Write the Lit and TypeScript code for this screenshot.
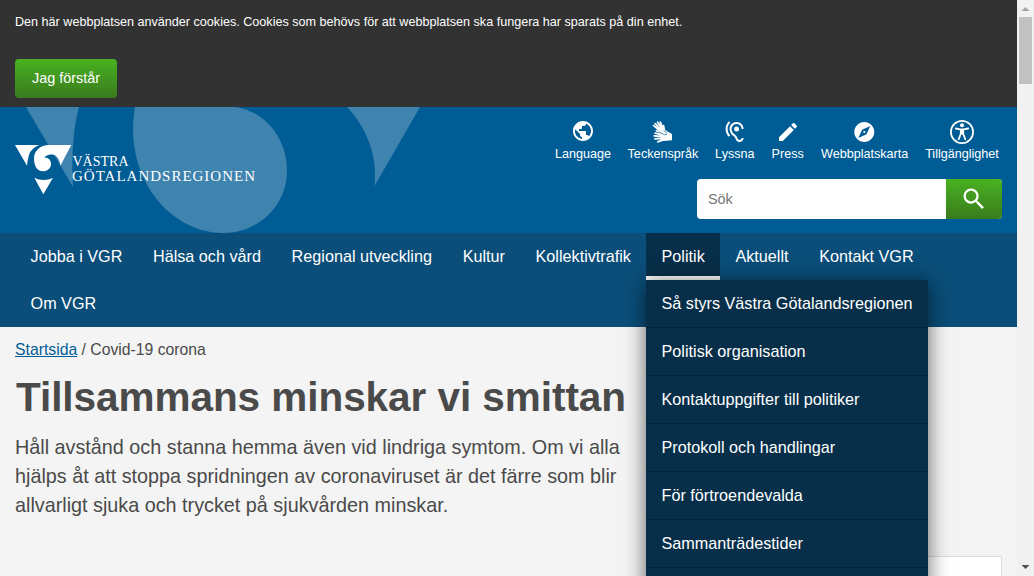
import { LitElement, html, svg, css } from "lit";
import { customElement } from "lit/decorators.js";

const tools = [
  { label: "Language", width: 56, icon: svg`<path fill="#fff" d="M12 2C6.480 2 2 6.480 2 12s4.480 10 10 10 10-4.480 10-10S17.520 2 12 2zm-1 17.930c-3.950-.49-7-3.850-7-7.930 0-.62.08-1.210.21-1.790L9 15v1c0 1.100.9 2 2 2v1.930zm6.900-2.540c-.26-.81-1-1.390-1.900-1.390h-1v-3c0-.55-.45-1-1-1H8v-2h2c.55 0 1-.45 1-1V7h2c1.100 0 2-.9 2-2v-.41c2.930 1.190 5 4.060 5 7.410 0 2.080-.8 3.970-2.100 5.390z"/>` },
  { label: "Teckenspråk", width: 71, icon: svg`<g fill="none" stroke="#fff" stroke-linecap="round"><path stroke-width="1.800" d="M7.500 10.500 2.700 6.600M8.600 9.500 4.200 4.600M10 8.500 6.600 3.300M11.500 8.500 9.300 3.200"/><path stroke-width="1.900" d="M13.200 11l-.7-4.200"/><path stroke-width="1.800" d="M11 15.800 4.200 14.200M11 17.500l-7.800-.6M11 19.300l-7 .6M12 20.900l-5.200 1.900M13.500 15.500 5.500 11.700"/><path fill="#fff" stroke="none" d="M6.800 10.500 10.800 7.600l2.600 2.600 1.800 1.600L21 15v6.200l-5.300.6-5.200.2-.6-5.500 2-1.200-4.400-2.600z"/><path stroke="#005c95" stroke-width=".7" stroke-linecap="butt" d="m7.500 12.800 6 3 2.500-.5M12.500 11.200l3.800 3.400"/></g>` },
  { label: "Lyssna", width: 40, icon: svg`<path fill="#fff" transform="translate(-.4 1)" d="M17 20c-.29 0-.56-.06-.76-.15-.71-.37-1.210-.88-1.710-2.380-.51-1.560-1.470-2.290-2.390-3-.79-.61-1.610-1.240-2.320-2.530C9.290 10.980 9 9.930 9 9c0-2.800 2.200-5 5-5s5 2.200 5 5h2c0-3.930-3.070-7-7-7S7 5.070 7 9c0 1.260.38 2.650 1.070 3.900.91 1.650 1.980 2.480 2.850 3.150.81.620 1.390 1.070 1.710 2.050.6 1.820 1.370 2.840 2.730 3.550.51.230 1.070.35 1.640.35 2.210 0 4-1.790 4-4h-2c0 1.100-.9 2-2 2zM7.640 2.640 6.220 1.220C4.230 3.210 3 5.960 3 9s1.230 5.790 3.220 7.780l1.410-1.410C6.010 13.740 5 11.490 5 9s1.010-4.740 2.640-6.360zM11.500 9a2.500 2.500 0 0 0 5 0 2.500 2.500 0 0 0-5 0z"/>` },
  { label: "Press", width: 33, icon: svg`<path fill="#fff" d="M3 17.250V21h3.750L17.810 9.940l-3.750-3.750L3 17.250zM20.710 7.040a1 1 0 0 0 0-1.410l-2.340-2.340a1 1 0 0 0-1.410 0l-1.830 1.830 3.750 3.750 1.830-1.830z" transform="translate(0 1)"/>` },
  { label: "Webbplatskarta", width: 88, icon: svg`<path fill="#fff" transform="translate(-.7 1)" d="M12 10.900a1.100 1.100 0 1 0 0 2.200 1.100 1.100 0 0 0 0-2.200zM12 2C6.480 2 2 6.480 2 12s4.480 10 10 10 10-4.480 10-10S17.520 2 12 2zm2.190 12.190L6 18l3.810-8.190L18 6l-3.810 8.190z"/>` },
  { label: "Tillgänglighet", width: 74, icon: svg`<g transform="translate(0 1)"><circle cx="12" cy="12" r="11.100" fill="none" stroke="#fff" stroke-width="1.700"/><circle cx="12" cy="5.300" r="2" fill="#fff"/><path fill="none" stroke="#fff" stroke-width="1.800" stroke-linecap="round" stroke-linejoin="round" d="M5.800 8.500 10.300 9.300h3.400l4.500-.8M10.800 9.500v4.200L8.700 19.200M13.200 9.500v4.200l2.100 5.500"/><path fill="#fff" d="M10 9h4v5.500h-4z"/></g>` },
];

const nav = ["Jobba i VGR", "Hälsa och vård", "Regional utveckling", "Kultur", "Kollektivtrafik", "Politik", "Aktuellt", "Kontakt VGR", "Om VGR"];
const submenu = ["Så styrs Västra Götalandsregionen", "Politisk organisation", "Kontaktuppgifter till politiker", "Protokoll och handlingar", "För förtroendevalda", "Sammanträdestider", ""];

@customElement("app-root")
class AppRoot extends LitElement {
  static styles = css`
    :host { display: block; height: 576px; overflow: hidden; font-family: "Liberation Sans", Arial, sans-serif; color: #4a4a4a; }
    * { box-sizing: border-box; }
    .frame { display: grid; grid-template-columns: 1017px 17px; height: 576px; }
    .page { height: 576px; overflow: hidden; background: #f4f4f4; }
    .cookie { height: 107px; background: #323232; padding: 14px 15px 0; color: #fff; font-size: 12.600px; line-height: 17px; }
    .cookie p { margin: 0 0 28px; white-space: nowrap; }
    .ok { display: block; width: 102px; height: 39px; padding: 0 0 1px; border: 0; border-radius: 4px; color: #fff; background: linear-gradient(#49b220, #3a7b1e); font: 14.400px "Liberation Sans", sans-serif; }
    .top { position: relative; height: 126px; background: #005c95; overflow: hidden; }
    .swirl { position: absolute; left: 0; top: 0; }
    .bar { position: relative; display: flex; justify-content: space-between; padding: 12px 15px 0; }
    .logo { margin-top: 24px; display: block; overflow: visible; }
    .right { display: flex; flex-direction: column; align-items: flex-end; }
    .tools { display: flex; gap: 16.400px; padding-right: 3px; }
    .tool { display: flex; flex-direction: column; align-items: center; font-size: 12.600px; line-height: 16px; color: #fff; white-space: nowrap; }
    .tool svg { display: block; margin-bottom: 3px; overflow: visible; }
    .search { display: flex; width: 305px; height: 40px; margin-top: 17px; border-radius: 4px; overflow: hidden; background: #fff; }
    .field { flex: 1; padding: 0 11px; font-size: 14.400px; line-height: 40px; color: #757575; }
    .go { width: 56px; display: grid; place-items: center; background: linear-gradient(#49b220, #3a7b1e); }
    .nav { position: relative; display: flex; flex-wrap: wrap; height: 94px; padding: 0 15px; background: #0a4e79; }
    .item { position: relative; height: 47px; padding: 0 15.100px 0 15.550px; line-height: 47px; font-size: 16.200px; color: #fff; white-space: nowrap; }
    .open { background: #082f49; border-bottom: 4px solid #fff; }
    .menu { position: absolute; z-index: 2; top: 47px; left: 0; width: 282px; background: #082f49; box-shadow: 0 3px 20px rgba(0, 0, 0, .6); }
    .row { height: 48px; padding: 0 15.550px; line-height: 47px; border-bottom: 1px solid #042236; }
    .main { padding: 13px 15px 0; }
    .crumbs { font-size: 15.750px; line-height: 20px; white-space: nowrap; }
    .crumbs a { color: #005c95; text-decoration: underline; }
    h1 { margin: 12px 0 0; padding-left: 1px; font-size: 40.500px; letter-spacing: -.05px; line-height: 50px; white-space: nowrap; }
    .lead { margin: 11px 0 0; width: 620px; font-size: 19.800px; line-height: 29px; }
    .card { margin: 36px 0 0 auto; width: 300px; height: 60px; background: #fff; border: 1px solid #dcdcdc; }
    .scroll { display: flex; flex-direction: column; align-items: center; justify-content: space-between; background: #f1f1f1; }
    .grip { width: 13px; height: 67px; background: #c1c1c1; margin-bottom: auto; }
    .arrow { display: block; }
  `;

  logo() {
    return svg`<svg class="logo" width="242" height="52" viewBox="0 0 242 52" fill="#fff">
      <path d="M0 2h24.500C18.500 4 14.500 8.500 13.500 14c-.7 3-1.100 5-1.500 8.700z"/>
      <path d="M34 2H56.300L45.300 22.700C45 17 42 12 37 11.600c-3.500-.3-6.500.9-7.700 3.400 2.500-1.200 6.700.8 6.700 6 0 4.500-4 7.300-8 7.300-6 0-9-5.300-9-12.800C19 8 25 2 34 2z"/>
      <path d="M19.300 34.800c6 2.900 12.500 2.900 18.700 0L28.300 51.200z"/>
      <g font-family="Liberation Serif, serif" font-size="15"><text x="57.500" y="22.500" font-size="14.500" textLength="56" lengthAdjust="spacingAndGlyphs">VÄSTRA</text><text x="57" y="37.500" textLength="183">GÖTALANDSREGIONEN</text></g>
    </svg>`;
  }

  render() {
    return html`<div class="frame">
      <div class="page">
        <div class="cookie"><p>Den här webbplatsen använder cookies. Cookies som behövs för att webbplatsen ska fungera har sparats på din enhet.</p><button class="ok">Jag förstår</button></div>
        <header class="top">
          <svg class="swirl" width="440" height="126" fill="#3f83af">
            <path d="M26 0h53c-5 18-8 45-6 80z"/>
            <path d="M135 0h100c30 4 52 31 52 64 0 34-28 62-64 62-55 0-100-58-88-126z"/>
            <path d="M347 0h73l-45.500 79C378 50 367 21 347 0z"/>
          </svg>
          <div class="bar">${this.logo()}
            <div class="right">
              <div class="tools">${tools.map((t) => html`<div class="tool" style="width:${t.width}px"><svg width="24" height="24" viewBox="0 0 24 24">${t.icon}</svg><span>${t.label}</span></div>`)}</div>
              <div class="search"><div class="field">Sök</div><div class="go"><svg width="28" height="28" viewBox="0 0 24 24" fill="#fff"><path d="M15.500 14h-.79l-.28-.27A6.471 6.471 0 0 0 16 9.500 6.500 6.500 0 1 0 9.500 16c1.610 0 3.090-.59 4.230-1.570l.27.28v.79l5 4.990L20.490 19l-4.990-5zm-6 0C7.010 14 5 11.990 5 9.500S7.010 5 9.500 5 14 7.010 14 9.500 11.990 14 9.500 14z"/></svg></div></div>
            </div>
          </div>
        </header>
        <nav class="nav">${nav.map((n) => n === "Politik"
          ? html`<div class="item open">${n}<div class="menu">${submenu.map((s) => html`<div class="row">${s}</div>`)}</div></div>`
          : html`<div class="item">${n}</div>`)}</nav>
        <main class="main">
          <div class="crumbs"><a>Startsida</a> / Covid-19 corona</div>
          <h1>Tillsammans minskar vi smittan</h1>
          <p class="lead">Håll avstånd och stanna hemma även vid lindriga symtom. Om vi alla hjälps åt att stoppa spridningen av coronaviruset är det färre som blir allvarligt sjuka och trycket på sjukvården minskar.</p>
          <div class="card"></div>
        </main>
      </div>
      <div class="scroll">
        <svg class="arrow" width="17" height="17"><path fill="#a3a3a3" d="M4.500 11h8l-4-4z"/></svg>
        <div class="grip"></div>
        <svg class="arrow" width="17" height="17"><path fill="#505050" d="M4.500 6h8l-4 4z"/></svg>
      </div>
    </div>`;
  }
}
